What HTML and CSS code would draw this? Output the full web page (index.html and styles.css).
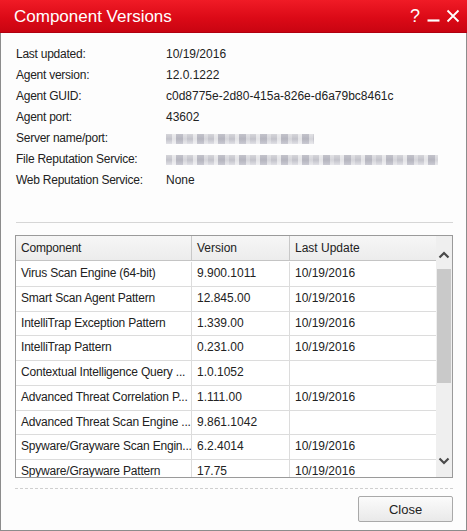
FILE: index.html
```html
<!DOCTYPE html>
<html lang="en">
<head>
    <meta charset="UTF-8">
    <title>Component Versions</title>
    <link rel="stylesheet" href="styles.css">
</head>
<body>
    <div class="dialog">
        <div class="titlebar">
            <span class="title">Component Versions</span>
            <div class="title-buttons">
                <span class="help">?</span>
                <svg class="btn-icon" width="13" height="14" viewBox="0 0 13 14">
                    <line x1="0.5" y1="11.5" x2="12.5" y2="11.5" stroke="#fff" stroke-width="2.2"/>
                </svg>
                <svg class="btn-icon" width="14" height="14" viewBox="0 0 14 14">
                    <path d="M1.5 1.5 L12.5 12.5 M12.5 1.5 L1.5 12.5" stroke="#fff" stroke-width="1.8" fill="none"/>
                </svg>
            </div>
        </div>

        <div class="content">
            <div class="info">
                <div class="info-row"><span class="label">Last updated:</span><span>10/19/2016</span></div>
                <div class="info-row"><span class="label">Agent version:</span><span>12.0.1222</span></div>
                <div class="info-row"><span class="label">Agent GUID:</span><span>c0d8775e-2d80-415a-826e-d6a79bc8461c</span></div>
                <div class="info-row"><span class="label">Agent port:</span><span>43602</span></div>
                <div class="info-row"><span class="label">Server name/port:</span><span class="blur blur-short"></span></div>
                <div class="info-row"><span class="label">File Reputation Service:</span><span class="blur blur-long"></span></div>
                <div class="info-row"><span class="label">Web Reputation Service:</span><span>None</span></div>
            </div>

            <hr class="divider">

            <div class="grid">
                <div class="grid-main">
                    <div class="grid-row grid-head">
                        <div class="cell c1">Component</div>
                        <div class="cell c2">Version</div>
                        <div class="cell c3">Last Update</div>
                    </div>
                    <div class="grid-body">
                        <div class="grid-row"><div class="cell c1">Virus Scan Engine (64-bit)</div><div class="cell c2">9.900.1011</div><div class="cell c3">10/19/2016</div></div>
                        <div class="grid-row"><div class="cell c1">Smart Scan Agent Pattern</div><div class="cell c2">12.845.00</div><div class="cell c3">10/19/2016</div></div>
                        <div class="grid-row"><div class="cell c1">IntelliTrap Exception Pattern</div><div class="cell c2">1.339.00</div><div class="cell c3">10/19/2016</div></div>
                        <div class="grid-row"><div class="cell c1">IntelliTrap Pattern</div><div class="cell c2">0.231.00</div><div class="cell c3">10/19/2016</div></div>
                        <div class="grid-row"><div class="cell c1">Contextual Intelligence Query ...</div><div class="cell c2">1.0.1052</div><div class="cell c3"></div></div>
                        <div class="grid-row"><div class="cell c1">Advanced Threat Correlation P...</div><div class="cell c2">1.111.00</div><div class="cell c3">10/19/2016</div></div>
                        <div class="grid-row"><div class="cell c1">Advanced Threat Scan Engine ...</div><div class="cell c2">9.861.1042</div><div class="cell c3"></div></div>
                        <div class="grid-row"><div class="cell c1">Spyware/Grayware Scan Engin...</div><div class="cell c2">6.2.4014</div><div class="cell c3">10/19/2016</div></div>
                        <div class="grid-row"><div class="cell c1">Spyware/Grayware Pattern</div><div class="cell c2">17.75</div><div class="cell c3">10/19/2016</div></div>
                    </div>
                </div>
                <div class="scrollbar">
                    <svg class="arrow" width="16" height="12" viewBox="0 0 16 12">
                        <path d="M3.5 8.5 L8 4 L12.5 8.5" stroke="#4a4a4a" stroke-width="2.2" fill="none"/>
                    </svg>
                    <div class="track"><div class="thumb"></div></div>
                    <svg class="arrow" width="16" height="12" viewBox="0 0 16 12">
                        <path d="M3.5 3.5 L8 8 L12.5 3.5" stroke="#4a4a4a" stroke-width="2.2" fill="none"/>
                    </svg>
                </div>
            </div>

            <div class="footer">
                <button class="close-btn">Close</button>
            </div>
        </div>
    </div>
</body>
</html>
```

FILE: styles.css
```css
body {
    margin: 0;
    font-family: "Liberation Sans", Arial, sans-serif;
    font-size: 12px;
    color: #222;
    background: #fff;
}
.dialog {
    width: 467px;
    height: 531px;
    box-sizing: border-box;
    border: 1px solid #8c8c8c;
    border-top: none;
    background: #fdfdfd;
    display: flex;
    flex-direction: column;
}
.titlebar {
    height: 33px;
    margin: 0 -1px;
    box-sizing: border-box;
    background: linear-gradient(#f01b26, #dc0a17 55%, #c90411);
    border-bottom: 1px solid #b00010;
    display: flex;
    align-items: center;
    justify-content: space-between;
    padding: 0 7px 0 14px;
    color: #fff;
}
.title {
    font-size: 17px;
    padding-top: 1px;
}
.title-buttons {
    display: flex;
    align-items: center;
    gap: 6px;
}
.help {
    font-size: 18px;
    width: 12px;
    text-align: center;
    padding-top: 1px;
}
.btn-icon {
    display: block;
}
.content {
    flex: 1;
    padding: 11px 14px 0 14px;
    display: flex;
    flex-direction: column;
}
.info-row {
    display: flex;
    height: 21px;
    line-height: 21px;
}
.label {
    width: 150px;
    padding-left: 1px;
    letter-spacing: -0.25px;
}
.blur {
    display: inline-block;
    height: 10px;
    margin-top: 6px;
    background:
        repeating-linear-gradient(90deg, rgba(255,255,255,0) 0 6px, rgba(255,255,255,0.55) 6px 10px, rgba(120,120,140,0.25) 10px 17px, rgba(255,255,255,0.3) 17px 21px),
        linear-gradient(#cfcfd4, #b9b9c2 50%, #dcdce2);
    opacity: 0.85;
}
.blur-short {
    width: 148px;
}
.blur-long {
    width: 272px;
}
.divider {
    border: none;
    border-top: 1px solid #d6d6d6;
    margin: 31px 0 0 1px;
    width: 437px;
}
.grid {
    margin: 12px 0 0 0;
    width: 438px;
    height: 243px;
    box-sizing: border-box;
    border: 1px solid #9a9a9a;
    display: flex;
    background: #fff;
}
.grid-main {
    flex: 1;
    display: flex;
    flex-direction: column;
    overflow: hidden;
}
.grid-row {
    display: flex;
    height: 24.75px;
    box-sizing: border-box;
    border-bottom: 1px solid #dcdcdc;
    flex-shrink: 0;
}
.grid-head {
    height: 25px;
    background: linear-gradient(#f6f6f6, #ececec);
    border-bottom: 1px solid #c4c4c4;
}
.grid-body {
    flex: 1;
    overflow: hidden;
    padding-top: 1px;
}
.cell {
    padding-left: 5px;
    line-height: 23px;
    white-space: nowrap;
    overflow: hidden;
    box-sizing: border-box;
    border-right: 1px solid #dcdcdc;
}
.grid-head .cell {
    border-right-color: #c8c8c8;
    line-height: 24px;
}
.c1 {
    width: 176px;
    letter-spacing: -0.2px;
}
.c2 {
    width: 98px;
}
.c3 {
    flex: 1;
    border-right: none;
}
.scrollbar {
    width: 16px;
    background: #efefef;
    display: flex;
    flex-direction: column;
    padding-top: 13px;
    padding-bottom: 10px;
}
.arrow {
    display: block;
    flex-shrink: 0;
}
.track {
    flex: 1;
    padding-top: 8px;
}
.thumb {
    margin-left: 1px;
    width: 14px;
    height: 114px;
    background: #c9c9c9;
}
.footer {
    margin: 10px 0 0 0;
    border-top: 1px dashed #cfcfcf;
    width: 438px;
    display: flex;
    justify-content: flex-end;
    padding-top: 7px;
}
.close-btn {
    width: 95px;
    height: 26px;
    margin-right: 0;
    border: 1px solid #a9a9a9;
    border-radius: 2px;
    background: linear-gradient(#fbfbfb, #e9e9e9);
    font-family: "Liberation Sans", Arial, sans-serif;
    font-size: 13px;
    color: #222;
}
```
